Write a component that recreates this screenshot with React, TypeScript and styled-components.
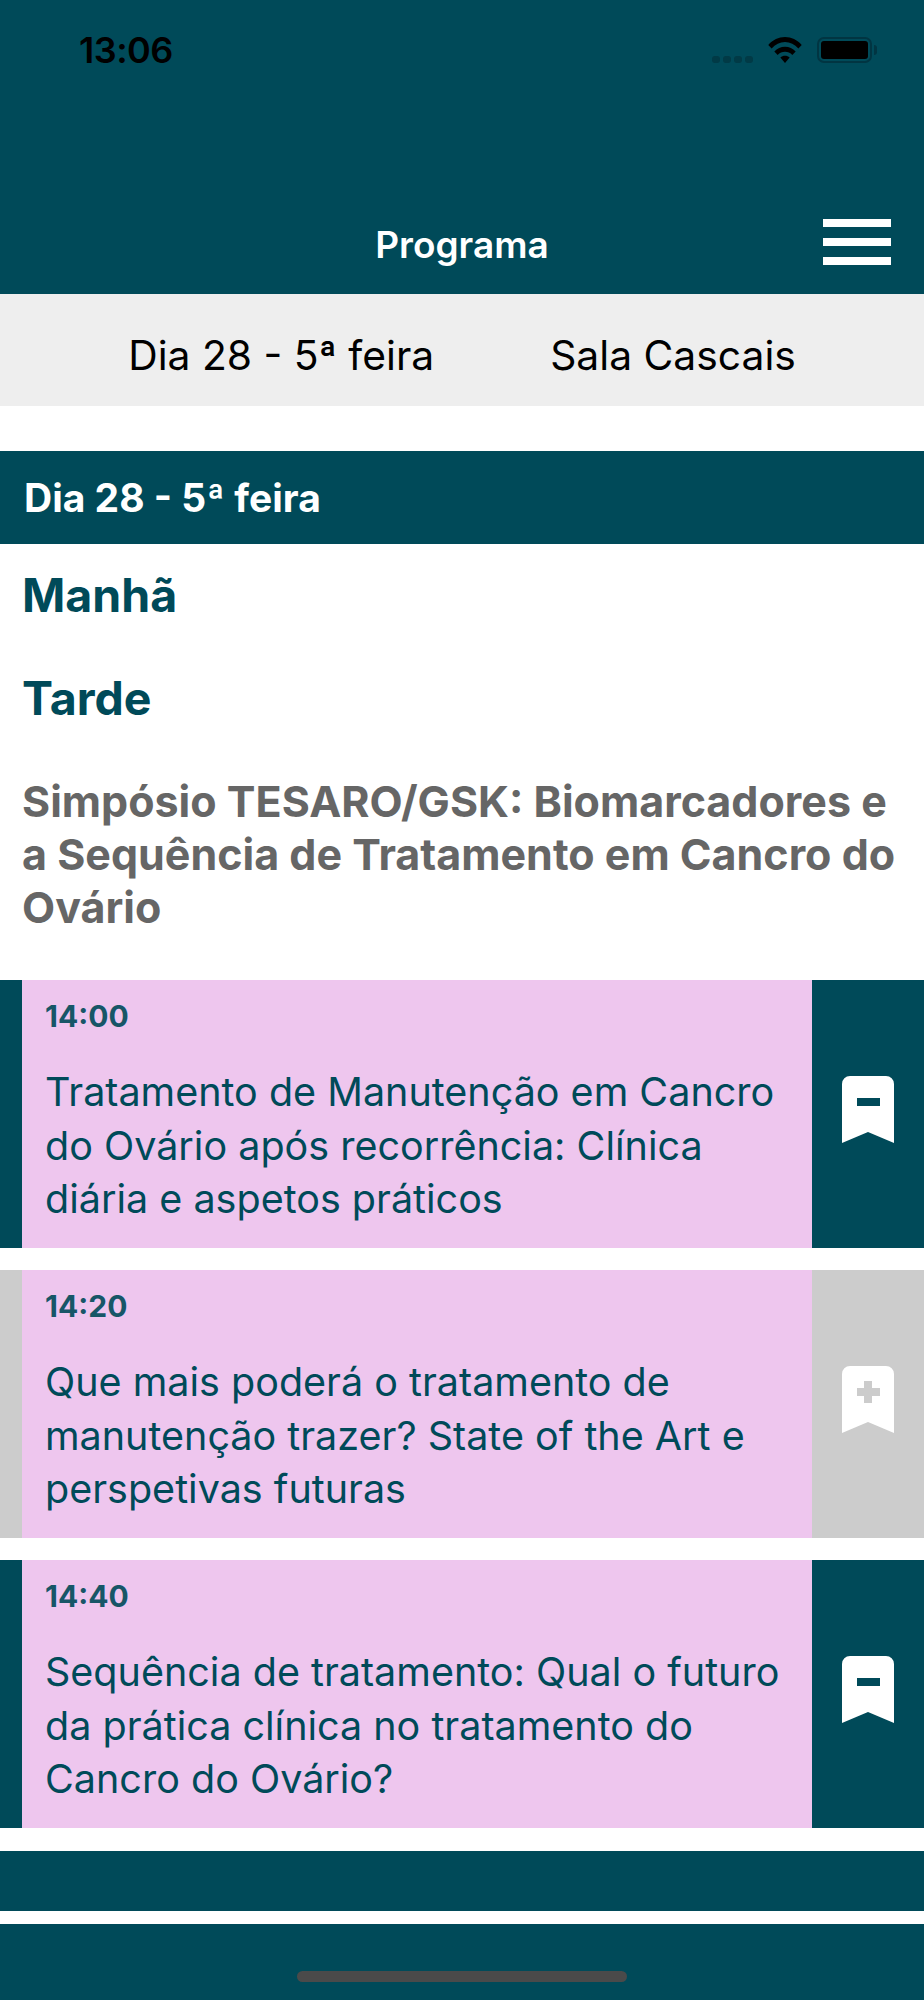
import styled, { createGlobalStyle } from "styled-components";

const TEAL = "#004a59";

const GlobalStyle = createGlobalStyle`
  html, body {
    margin: 0;
    padding: 0;
    background: #fff;
    font-family: Inter, "Liberation Sans", sans-serif;
  }
`;

const talks = [
  {
    time: "14:00",
    title: "Tratamento de Manutenção em Cancro do Ovário após recorrência: Clínica diária e aspetos práticos",
    saved: true,
  },
  {
    time: "14:20",
    title: "Que mais poderá o tratamento de manutenção trazer? State of the Art e perspetivas futuras",
    saved: false,
  },
  {
    time: "14:40",
    title: "Sequência de tratamento: Qual o futuro da prática clínica no tratamento do Cancro do Ovário?",
    saved: true,
  },
];

const Bookmark = ({ saved, colour }: { saved: boolean; colour: string }) => (
  <svg width="52" height="67" viewBox="0 0 52 67">
    <path d="M0 67V8a8 8 0 0 1 8-8h36a8 8 0 0 1 8 8v59L26 56z" fill="#fff" />
    {saved ? (
      <rect x="15" y="22" width="23" height="8" fill={colour} />
    ) : (
      <path d="M22 15h8v7h8v8h-8v7h-8v-7h-7v-8h7z" fill={colour} />
    )}
  </svg>
);

const App = () => {
  return (
    <Page>
      <GlobalStyle />
      <Header>
        <StatusBar>
          <Clock>13:06</Clock>
          <StatusIcons>
            <Signal>
              <i /><i /><i /><i />
            </Signal>
            <svg width="36" height="26" viewBox="0 0 36 28">
              <path d="M0 8.500C5 3 11 0 18 0s13 3 18 8.500l-3.600 4C28.500 8 23.500 5.500 18 5.500S7.500 8 3.600 12.500z" fill="#000" />
              <path d="M6.500 15.500C9.500 12.300 13.500 10.500 18 10.500s8.500 1.800 11.500 5l-3.600 4C23.800 17.200 21 16 18 16s-5.800 1.200-7.900 3.500z" fill="#000" />
              <path d="M13 22c1.400-1.200 3.100-1.800 5-1.800s3.600.6 5 1.800l-5 6z" fill="#000" />
            </svg>
            <Battery>
              <BatteryFill />
            </Battery>
          </StatusIcons>
        </StatusBar>
        <TitleBar>
          <Title>Programa</Title>
          <MenuButton>
            <span /><span /><span />
          </MenuButton>
        </TitleBar>
      </Header>
      <FilterBar>
        <FilterLabel>Dia 28 - 5ª feira</FilterLabel>
        <FilterLabel>Sala Cascais</FilterLabel>
      </FilterBar>
      <DayBar>Dia 28 - 5ª feira</DayBar>
      <PeriodTitle>Manhã</PeriodTitle>
      <PeriodTitle>Tarde</PeriodTitle>
      <SessionTitle>Simpósio TESARO/GSK: Biomarcadores e a Sequência de Tratamento em Cancro do Ovário</SessionTitle>
      <TalkList>
        {talks.map((talk) => (
          <TalkCard key={talk.time} $saved={talk.saved}>
            <TalkBody>
              <TalkTime>{talk.time}</TalkTime>
              <TalkTitle>{talk.title}</TalkTitle>
            </TalkBody>
            <SaveButton>
              <Bookmark saved={talk.saved} colour={talk.saved ? TEAL : "#cccccc"} />
            </SaveButton>
          </TalkCard>
        ))}
      </TalkList>
      <FooterStrip />
      <BottomBar>
        <HomeIndicator />
      </BottomBar>
    </Page>
  );
};

const Page = styled.div`
  width: 924px;
  height: 2000px;
  overflow: hidden;
  background: #fff;
`;

const Header = styled.header`
  height: 294px;
  background: ${TEAL};
  display: flex;
  flex-direction: column;
  justify-content: space-between;
`;

const StatusBar = styled.div`
  display: flex;
  justify-content: space-between;
  align-items: center;
  padding: 30px 52px 0 79px;
`;

const Clock = styled.span`
  font-size: 36px;
  line-height: 40px;
  font-weight: 600;
  color: #000;
  letter-spacing: -0.5px;
`;

const StatusIcons = styled.div`
  display: flex;
  align-items: center;
  gap: 14px;
`;

const Signal = styled.div`
  display: flex;
  gap: 3px;
  margin-top: 19px;
  i {
    display: block;
    width: 8px;
    height: 7px;
    border-radius: 3px;
    background: #013a46;
  }
`;

const Battery = styled.div`
  position: relative;
  width: 55px;
  height: 26px;
  box-sizing: border-box;
  border: 2px solid #013542;
  border-radius: 7px;
  padding: 2px;
  &::after {
    content: "";
    position: absolute;
    right: -7px;
    top: 6px;
    width: 3px;
    height: 10px;
    border-radius: 0 3px 3px 0;
    background: #013542;
  }
`;

const BatteryFill = styled.div`
  height: 100%;
  background: #000;
  border-radius: 3px;
`;

const TitleBar = styled.div`
  position: relative;
  height: 75px;
  display: flex;
  justify-content: center;
`;

const Title = styled.h1`
  margin: 0;
  font-size: 37px;
  line-height: 52px;
  font-weight: 600;
  color: #fff;
`;

const MenuButton = styled.div`
  position: absolute;
  right: 33px;
  top: 0;
  width: 68px;
  display: flex;
  flex-direction: column;
  gap: 11px;
  span {
    display: block;
    height: 8px;
    background: #fff;
  }
`;

const FilterBar = styled.div`
  height: 112px;
  box-sizing: border-box;
  padding-top: 10px;
  margin-bottom: 45px;
  background: #eeeeee;
  display: flex;
  align-items: center;
  justify-content: center;
  gap: 116px;
`;

const FilterLabel = styled.span`
  font-size: 40.800px;
  color: #000;
`;

const DayBar = styled.div`
  height: 93px;
  background: ${TEAL};
  color: #fff;
  font-size: 39px;
  font-weight: 700;
  line-height: 93px;
  padding-left: 24px;
`;

const PeriodTitle = styled.h2`
  margin: 0;
  height: 103px;
  padding: 24px 22px 0;
  box-sizing: border-box;
  font-size: 46.500px;
  line-height: 54px;
  font-weight: 700;
  color: ${TEAL};
`;

const SessionTitle = styled.h3`
  margin: 25px 0 0;
  padding: 0 22px;
  font-size: 43px;
  line-height: 53px;
  font-weight: 700;
  color: #666666;
`;

const TalkList = styled.div`
  margin-top: 46px;
  display: flex;
  flex-direction: column;
  gap: 22px;
`;

const TalkCard = styled.article<{ $saved: boolean }>`
  height: 268px;
  display: flex;
  padding-left: 22px;
  background: ${(props) => (props.$saved ? TEAL : "#cccccc")};
`;

const TalkBody = styled.div`
  width: 790px;
  box-sizing: border-box;
  padding: 18px 24px 0 23px;
  background: #eec6ee;
  color: ${TEAL};
`;

const TalkTime = styled.div`
  font-size: 30px;
  line-height: 36px;
  font-weight: 700;
  opacity: 0.9;
`;

const TalkTitle = styled.p`
  margin: 32px 0 0;
  font-size: 39.500px;
  line-height: 53.500px;
`;

const SaveButton = styled.div`
  flex: 1;
  display: flex;
  align-items: flex-start;
  justify-content: center;
  padding-top: 96px;
`;

const FooterStrip = styled.div`
  margin-top: 23px;
  height: 60px;
  background: ${TEAL};
`;

const BottomBar = styled.footer`
  margin-top: 13px;
  height: 76px;
  background: ${TEAL};
  display: flex;
  justify-content: center;
  padding-top: 47px;
  box-sizing: border-box;
`;

const HomeIndicator = styled.div`
  width: 330px;
  height: 11px;
  border-radius: 6px;
  background: #4a4a4a;
`;

export default App;
